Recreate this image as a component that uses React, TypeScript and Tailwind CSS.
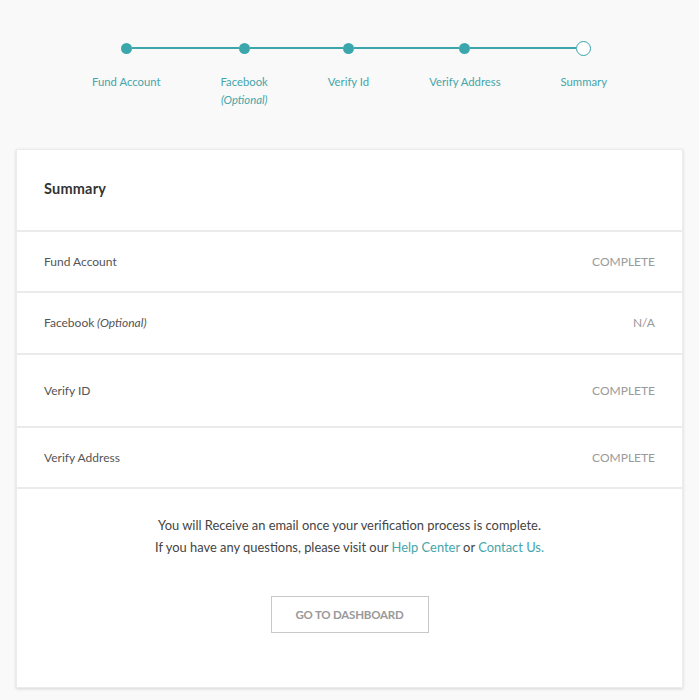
const steps = [
  { label: "Fund Account", done: true },
  { label: "Facebook", optional: true, done: true },
  { label: "Verify Id", done: true },
  { label: "Verify Address", done: true },
  { label: "Summary", done: false },
];

const rows = [
  { label: "Fund Account", status: "COMPLETE", h: "h-[61px]" },
  { label: "Facebook", optional: true, status: "N/A", h: "h-[62px]" },
  { label: "Verify ID", status: "COMPLETE", h: "h-[73px]" },
  { label: "Verify Address", status: "COMPLETE", h: "h-[61px]" },
];

function Stepper() {
  return (
    <div className="flex justify-center pt-[41px]">
      {steps.map((s, i) => (
        <div key={s.label} className="flex">
          {i > 0 && (
            <div className="w-[60px] h-[14px] flex items-center">
              <div className="h-[1.5px] w-full bg-[#3ba7ac]" />
            </div>
          )}
          <div className="flex flex-col items-center">
            <div className="flex items-center w-full h-[14px]">
              <div className={`flex-1 h-[1.5px] ${i > 0 ? "bg-[#3ba7ac]" : ""}`} />
              {s.done ? (
                <div className="w-[11px] h-[11px] rounded-full bg-[#3ba7ac] shrink-0" />
              ) : (
                <div className="w-[15px] h-[15px] rounded-full border-[1.5px] border-[#3ba7ac] bg-white shrink-0" />
              )}
              <div className={`flex-1 h-[1.5px] ${i < steps.length - 1 ? "bg-[#3ba7ac]" : ""}`} />
            </div>
            <div className="mt-[18px] text-[11.3px] leading-[18px] text-[#45a5aa] whitespace-nowrap text-center">
              {s.label}
              {s.optional && <div className="italic">(Optional)</div>}
            </div>
          </div>
        </div>
      ))}
    </div>
  );
}

export default function App() {
  return (
    <div className="min-h-[700px] bg-[#f9f9f9] pb-[13px] font-['Lato',sans-serif]">
      <Stepper />

      <div className="mx-[16px] mt-[40px] bg-white border border-[#ececec] shadow-[0_1px_3px_rgba(0,0,0,0.15)]">
        <div className="h-[82px] flex items-center px-[27px] pb-[3px] border-b-2 border-[#ebebeb]">
          <h2 className="text-[14.5px] font-bold text-[#333] tracking-[0.2px]">Summary</h2>
        </div>

        {rows.map((r) => (
          <div
            key={r.label}
            className={`${r.h} flex items-center justify-between px-[27px] border-b-2 border-[#ebebeb]`}
          >
            <span className="text-[12px] text-[#555]">
              {r.label}
              {r.optional && <span className="italic"> (Optional)</span>}
            </span>
            <span className="text-[12px] text-[#9a9a9a]">{r.status}</span>
          </div>
        ))}

        <div className="flex flex-col items-center pt-[25px] pb-[54px]">
          <p className="text-[12.9px] leading-[22px] text-[#444] text-center">
            You will Receive an email once your verification process is complete.
            <br />
            If you have any questions, please visit our{" "}
            <a className="text-[#45a5aa]">Help Center</a> or{" "}
            <a className="text-[#45a5aa]">Contact Us.</a>
          </p>
          <button className="mt-[38px] w-[158px] h-[37px] border border-[#c8c8c8] text-[11.5px] font-bold text-[#999] tracking-[-0.2px]">
            GO TO DASHBOARD
          </button>
        </div>
      </div>
    </div>
  );
}
